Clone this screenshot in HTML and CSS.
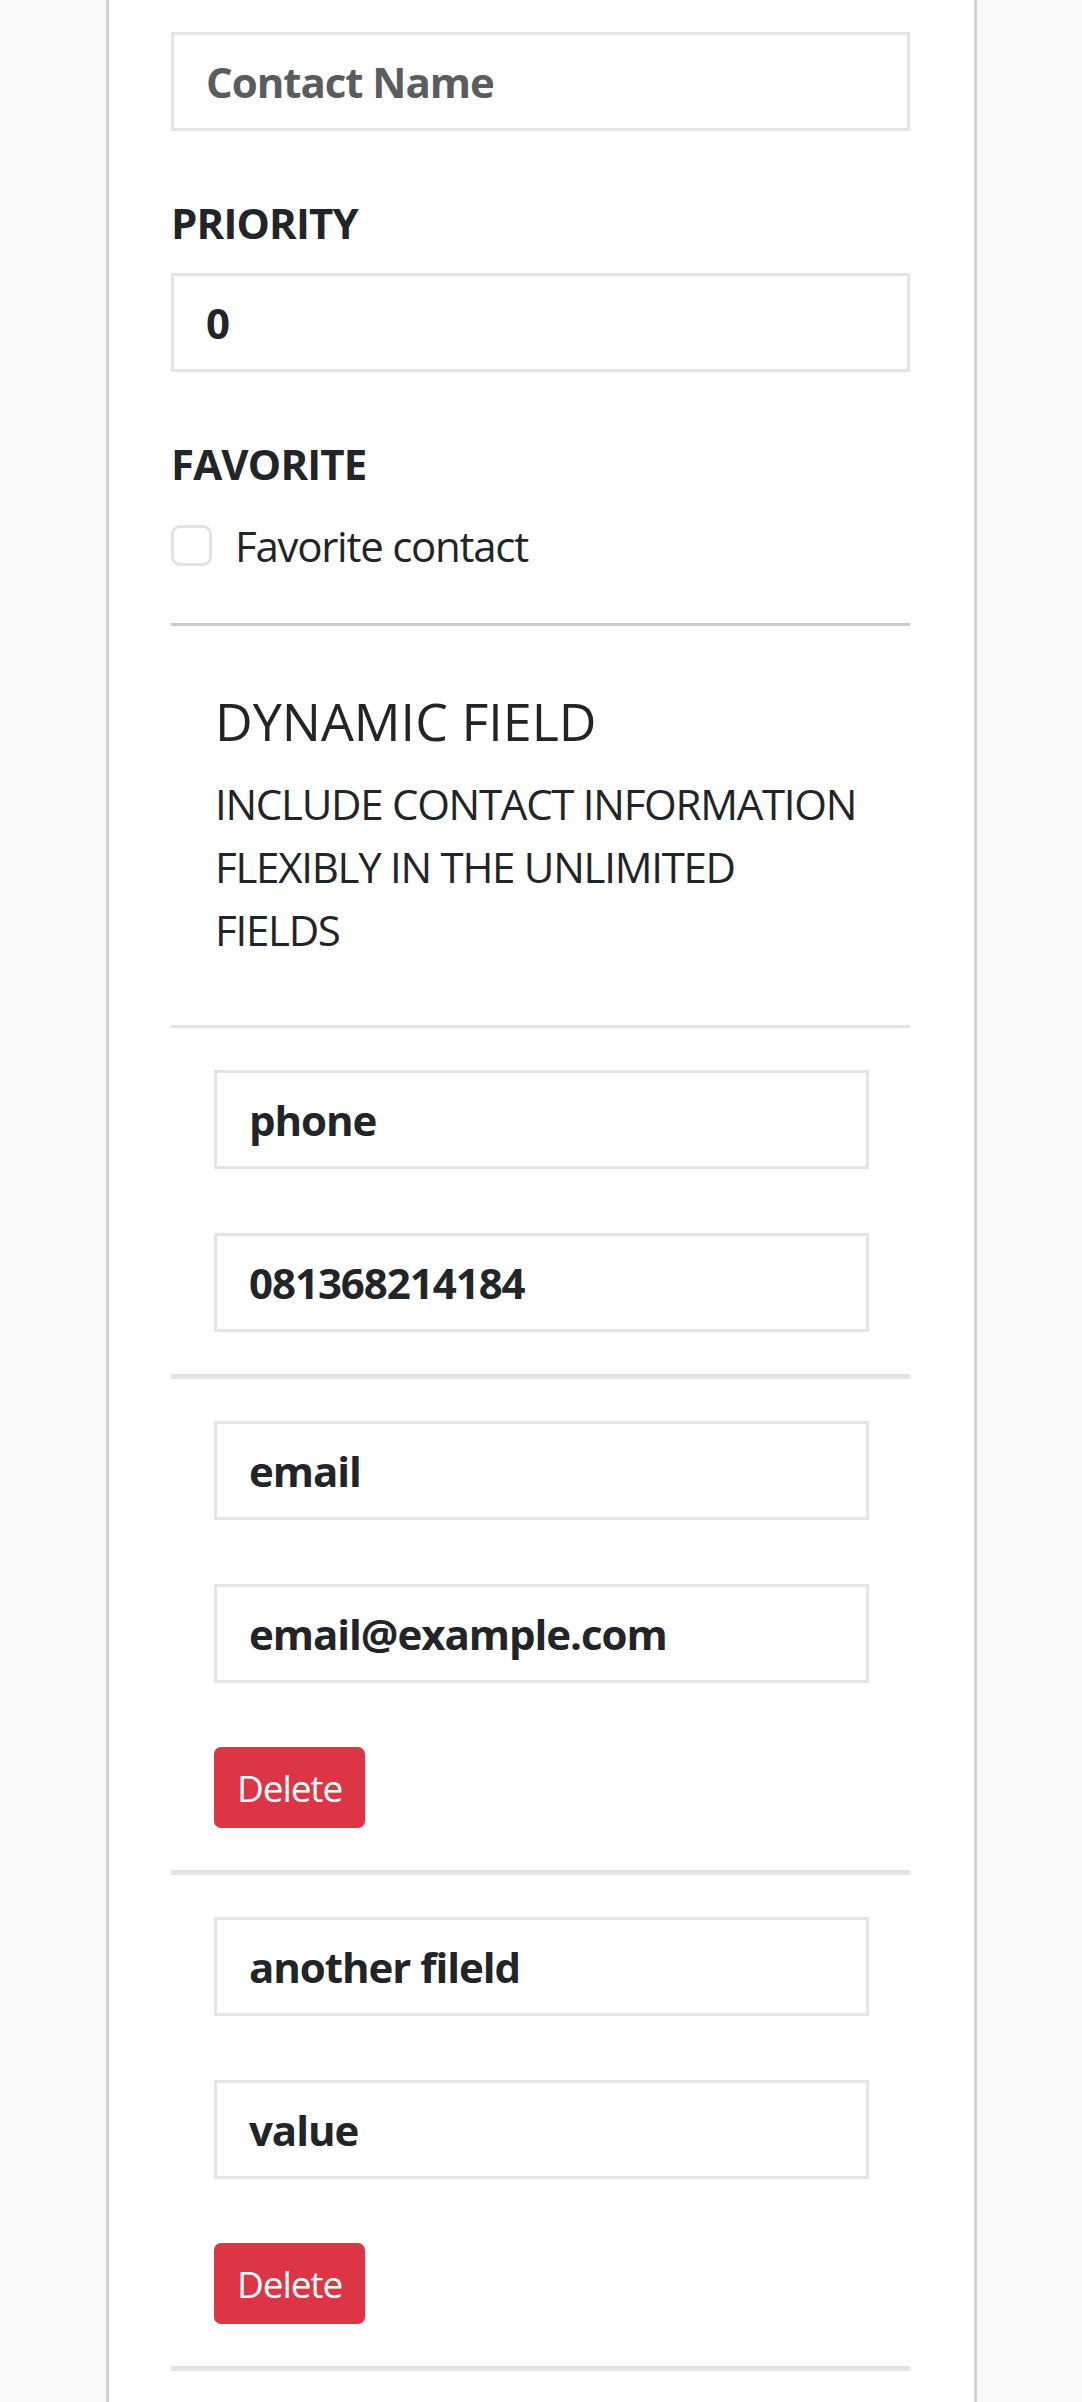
FILE: index.html
```html
<!DOCTYPE html>
<html lang="en">
<head>
<meta charset="utf-8">
<title>Contact form</title>
<link rel="stylesheet" href="styles.css">
</head>
<body>
<div class="card">
  <input class="field" type="text" placeholder="Contact Name">

  <label class="label">PRIORITY</label>
  <input class="field" type="text" value="0">

  <label class="label">FAVORITE</label>
  <div class="check-row">
    <span class="checkbox"></span>
    <span class="check-text">Favorite contact</span>
  </div>

  <hr class="rule-dark">

  <div class="intro">
    <h5 class="intro-title">DYNAMIC FIELD</h5>
    <p class="intro-text">INCLUDE CONTACT INFORMATION FLEXIBLY IN THE UNLIMITED FIELDS</p>
  </div>

  <hr class="rule-light">

  <div class="block">
    <input class="field" type="text" value="phone">
    <input class="field" type="text" value="081368214184">
  </div>
  <hr class="rule-thick">

  <div class="block">
    <input class="field" type="text" value="email">
    <input class="field" type="text" value="email@example.com">
    <button class="btn-delete" type="button">Delete</button>
  </div>
  <hr class="rule-thick">

  <div class="block">
    <input class="field" type="text" value="another fileld">
    <input class="field" type="text" value="value">
    <button class="btn-delete" type="button">Delete</button>
  </div>
  <hr class="rule-thick">
</div>
</body>
</html>
```

FILE: styles.css
```css
html, body {
  margin: 0;
  padding: 0;
}
body {
  background: #f8f9fa;
  font-family: "Open Sans", "Noto Sans", sans-serif;
  color: #212529;
}
.card {
  box-sizing: border-box;
  width: 871px;
  margin-left: 106px;
  min-height: 2402px;
  background: #ffffff;
  border-left: 3px solid #d4d4d4;
  border-right: 3px solid #d4d4d4;
  padding: 32px 64px 0 62px;
  display: flex;
  flex-direction: column;
  align-items: stretch;
}
.field {
  box-sizing: border-box;
  display: block;
  width: 100%;
  height: 99px;
  margin: 0;
  padding: 0 32px;
  border: 3px solid #e1e4e8;
  border-radius: 0;
  background: #fff;
  font-family: inherit;
  font-size: 42px;
  font-weight: 700;
  color: #212529;
  outline: none;
  letter-spacing: -0.025em;
}
.field::placeholder {
  color: #5a5d60;
  opacity: 1;
}
.label {
  display: block;
  margin: 60px 0 19px;
  font-size: 42px;
  line-height: 63px;
  font-weight: 700;
  letter-spacing: -0.02em;
}
.check-row {
  display: flex;
  align-items: center;
  gap: 23px;
  height: 63px;
}
.checkbox {
  box-sizing: border-box;
  width: 41px;
  height: 41px;
  border: 3px solid #dfe2e6;
  border-radius: 9px;
  background: #fff;
}
.check-text {
  font-size: 42px;
  line-height: 63px;
  letter-spacing: -0.03em;
}
.rule-dark {
  margin: 46px 0 0;
  border: 0;
  height: 3px;
  background: #cacaca;
}
.intro {
  padding: 63px 42px 0 44px;
}
.intro-title {
  margin: 0 0 20px;
  font-size: 52px;
  line-height: 63px;
  font-weight: 500;
  letter-spacing: 0;
}
.intro-text {
  margin: 0;
  font-size: 42px;
  line-height: 63px;
  font-weight: 400;
  letter-spacing: -0.03em;
}
.rule-light {
  margin: 64px 0 0;
  border: 0;
  height: 3px;
  background: #e2e4e7;
}
.rule-thick {
  margin: 0;
  border: 0;
  height: 5px;
  background: #e2e4e8;
}
.block {
  display: flex;
  flex-direction: column;
  align-items: flex-start;
  gap: 64px;
  padding: 42px 41px 42px 43px;
}
.btn-delete {
  box-sizing: border-box;
  height: 81px;
  padding: 0 23px;
  border: 0;
  border-radius: 7px;
  background: #dc3545;
  color: #ffffff;
  font-family: inherit;
  font-size: 37px;
  font-weight: 400;
  letter-spacing: -0.03em;
  cursor: pointer;
}
```
